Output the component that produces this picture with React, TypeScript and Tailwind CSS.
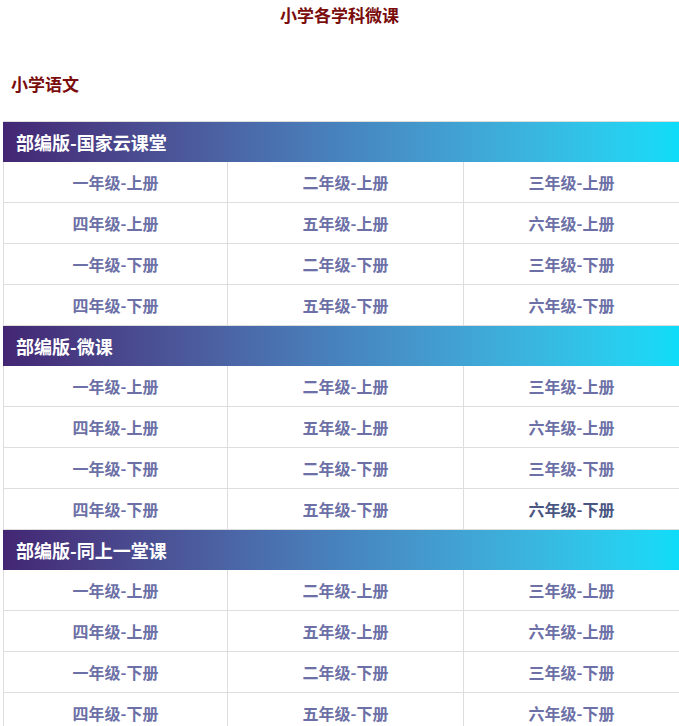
const sections = [
  { title: "部编版-国家云课堂", active: "" },
  { title: "部编版-微课", active: "六年级-下册" },
  { title: "部编版-同上一堂课", active: "" },
];

const rows = [
  ["一年级-上册", "二年级-上册", "三年级-上册"],
  ["四年级-上册", "五年级-上册", "六年级-上册"],
  ["一年级-下册", "二年级-下册", "三年级-下册"],
  ["四年级-下册", "五年级-下册", "六年级-下册"],
];

export default function App() {
  return (
    <div
      className="min-h-screen bg-white overflow-hidden"
      style={{ fontFamily: '"Noto Sans CJK SC", "Noto Sans", sans-serif' }}
    >
      <h1 className="text-center text-[17px] font-bold text-[#7a0c0c] leading-[30px]">
        小学各学科微课
      </h1>
      <h2 className="mt-[38px] pl-[11px] text-[17px] font-bold text-[#7a0c0c] leading-[32px]">
        小学语文
      </h2>

      {/* tables */}
      <div className="mt-[21px] ml-[3px] w-[680px] border-t border-[#dddddd]">
        {sections.map((s) => (
          <div key={s.title}>
            <div className="h-[40px] flex items-center pl-[13px] bg-linear-to-r from-[#432673] via-[#4784bf] to-[#08def9]">
              <span className="text-white text-[18px] font-bold">{s.title}</span>
            </div>
            {rows.map((r, i) => (
              <div key={i} className="grid grid-cols-[224px_236px_216px_1fr] border-b border-[#dddddd]">
                {r.map((c) => (
                  <div
                    key={c}
                    className={`h-[40px] flex items-center justify-center border-l border-[#dddddd] text-[16px] font-bold pb-px ${
                      c === s.active ? "text-[#4a5682]" : "text-[#6c70a6]"
                    }`}
                  >
                    {c}
                  </div>
                ))}
              </div>
            ))}
          </div>
        ))}
      </div>
    </div>
  );
}
